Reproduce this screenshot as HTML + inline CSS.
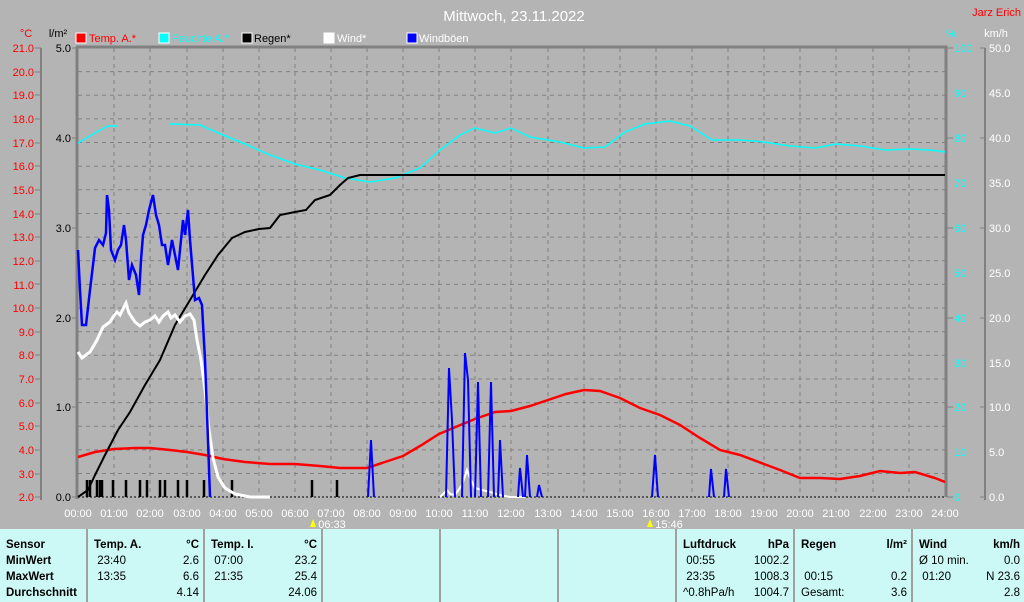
<!DOCTYPE html>
<html><head><meta charset="utf-8"><style>
*{margin:0;padding:0}
body{width:1024px;height:602px;background:#b4b4b4;overflow:hidden;position:relative;font-family:"Liberation Sans",sans-serif}
svg{position:absolute;left:0;top:0}
table{position:absolute;left:0;top:529px;width:1024px;height:73px;border-collapse:collapse;background:#ccf8f6;font-size:11.5px}
td{vertical-align:top;border-right:2px solid #a0a0a0;padding:8px 4px 0 6px;line-height:16px}
.r{display:flex;justify-content:space-between}
b{font-weight:bold}
</style></head><body>
<svg width="1024" height="602" font-family="Liberation Sans, sans-serif">
<text x="514" y="21" fill="#fff" font-size="15" text-anchor="middle">Mittwoch, 23.11.2022</text>
<text x="1021" y="16" fill="#f00" font-size="11" text-anchor="end">Jarz Erich</text>
<text x="26" y="37" fill="#f00" font-size="11" text-anchor="middle">°C</text>
<text x="58" y="37" fill="#000" font-size="11" text-anchor="middle">l/m²</text>
<text x="951" y="37" fill="#0ff" font-size="11" text-anchor="middle">%</text>
<text x="996" y="37" fill="#fff" font-size="11" text-anchor="middle">km/h</text>
<g font-size="11">
<rect x="76" y="33" width="10" height="10" fill="#f00" stroke="#fff"/><text x="89" y="42" fill="#f00">Temp. A.*</text>
<rect x="159" y="33" width="10" height="10" fill="#0ff" stroke="#fff"/><text x="172" y="42" fill="#0ff">Feuchte A.*</text>
<rect x="242" y="33" width="10" height="10" fill="#000" stroke="#fff"/><text x="254" y="42" fill="#000">Regen*</text>
<rect x="324" y="33" width="10" height="10" fill="#fff" stroke="#fff"/><text x="337" y="42" fill="#fff">Wind*</text>
<rect x="407" y="33" width="10" height="10" fill="#00f" stroke="#fff"/><text x="419" y="42" fill="#fff">Windböen</text>
</g>
<g stroke="#808080" stroke-dasharray="4,4" stroke-width="1">
<path d="M78 71.6H945M78 95.3H945M78 118.9H945M78 142.5H945M78 166.2H945M78 189.8H945M78 213.5H945M78 237.1H945M78 260.8H945M78 284.4H945M78 308H945M78 331.7H945M78 355.3H945M78 379H945M78 402.6H945M78 426.3H945M78 449.9H945M78 473.5H945"/>
<path d="M114 48V497M150 48V497M187 48V497M223 48V497M259 48V497M295 48V497M331 48V497M367 48V497M403 48V497M439 48V497M475 48V497M511 48V497M548 48V497M584 48V497M620 48V497M656 48V497M692 48V497M728 48V497M764 48V497M800 48V497M836 48V497M873 48V497M909 48V497"/>
</g>
<path d="M76 47H946V497M77 47V499" fill="none" stroke="#808080" stroke-width="3"/>
<path d="M78 497H945" stroke="#000" stroke-dasharray="2,2"/>
<path d="M41 48V500M985 48V500" stroke="#808080" stroke-width="2"/>
<g fill="#f00" font-size="11" text-anchor="end">
<text x="34" y="52">21.0</text><text x="34" y="76">20.0</text><text x="34" y="99">19.0</text><text x="34" y="123">18.0</text><text x="34" y="147">17.0</text><text x="34" y="170">16.0</text><text x="34" y="194">15.0</text><text x="34" y="218">14.0</text><text x="34" y="241">13.0</text><text x="34" y="265">12.0</text><text x="34" y="289">11.0</text><text x="34" y="312">10.0</text><text x="34" y="336">9.0</text><text x="34" y="359">8.0</text><text x="34" y="383">7.0</text><text x="34" y="407">6.0</text><text x="34" y="430">5.0</text><text x="34" y="454">4.0</text><text x="34" y="478">3.0</text><text x="34" y="501">2.0</text>
</g>
<path d="M35 48h6M35 72h6M35 95h6M35 119h6M35 143h6M35 166h6M35 190h6M35 214h6M35 237h6M35 261h6M35 284h6M35 308h6M35 332h6M35 355h6M35 379h6M35 403h6M35 426h6M35 450h6M35 474h6M35 497h6M72 48h5M72 138h5M72 228h5M72 318h5M72 407h5M72 497h5M947 48h6M947 138h6M947 228h6M947 318h6M947 407h6M947 497h6M980 48h5M980 138h5M980 228h5M980 318h5M980 407h5M980 497h5" stroke="#808080"/>
<g font-size="11" text-anchor="end" fill="#000">
<text x="71" y="52">5.0</text><text x="71" y="142">4.0</text><text x="71" y="232">3.0</text><text x="71" y="322">2.0</text><text x="71" y="411">1.0</text><text x="71" y="501">0.0</text>
</g>
<g font-size="11" fill="#0ff">
<text x="954" y="52">100</text><text x="954" y="97">90</text><text x="954" y="142">80</text><text x="954" y="187">70</text><text x="954" y="232">60</text><text x="954" y="277">50</text><text x="954" y="322">40</text><text x="954" y="367">30</text><text x="954" y="411">20</text><text x="954" y="456">10</text><text x="954" y="501">0</text>
</g>
<g font-size="11" fill="#fff">
<text x="989" y="52">50.0</text><text x="989" y="97">45.0</text><text x="989" y="142">40.0</text><text x="989" y="187">35.0</text><text x="989" y="232">30.0</text><text x="989" y="277">25.0</text><text x="989" y="322">20.0</text><text x="989" y="367">15.0</text><text x="989" y="411">10.0</text><text x="989" y="456">5.0</text><text x="989" y="501">0.0</text>
</g>
<g font-size="11" fill="#fff" text-anchor="middle">
<text x="78" y="517">00:00</text><text x="114" y="517">01:00</text><text x="150" y="517">02:00</text><text x="187" y="517">03:00</text><text x="223" y="517">04:00</text><text x="259" y="517">05:00</text><text x="295" y="517">06:00</text><text x="331" y="517">07:00</text><text x="367" y="517">08:00</text><text x="403" y="517">09:00</text><text x="439" y="517">10:00</text><text x="475" y="517">11:00</text><text x="511" y="517">12:00</text><text x="548" y="517">13:00</text><text x="584" y="517">14:00</text><text x="620" y="517">15:00</text><text x="656" y="517">16:00</text><text x="692" y="517">17:00</text><text x="728" y="517">18:00</text><text x="764" y="517">19:00</text><text x="800" y="517">20:00</text><text x="836" y="517">21:00</text><text x="873" y="517">22:00</text><text x="909" y="517">23:00</text><text x="945" y="517">24:00</text>
<text x="332" y="528">06:33</text><text x="669" y="528">15:46</text>
</g>
<path d="M313 519l3 8h-6z" fill="#ff0"/><path d="M650 519l3 8h-6z" fill="#ff0"/>
<path d="M87 480V497M90 480V497M97 480V497M100 480V497M102 480V497M113 480V497M126 480V497M140 480V497M147 480V497M160 480V497M165 480V497M178 480V497M187 480V497M204 480V497M232 480V497M312 480V497M337 480V497" stroke="#000" stroke-width="2.5"/>
<polyline fill="none" stroke="#0ff" stroke-width="1.5" points="78,143 90,136 100,130 108,126 118,126"/>
<polyline fill="none" stroke="#0ff" stroke-width="1.5" points="170,124 200,125 223,135 245,144 270,155 295,164 320,170 345,178 370,182 395,178 420,168 440,150 460,135 475,128 495,133 511,128 530,137 560,142 584,148 605,147 625,132 645,124 670,121 690,126 712,140 740,140 764,142 790,146 815,148 836,144 860,146 885,150 909,149 930,150 945,152"/>
<polyline fill="none" stroke="#f00" stroke-width="2.5" points="78,457 95,452 114,449 135,448 150,448 170,450 187,452 205,455 223,459 245,462 270,464 295,464 320,466 340,468 367,468 385,462 403,456 420,446 439,434 458,426 475,419 495,412 511,411 530,406 548,400 566,394 584,390 600,391 620,398 640,408 660,415 680,425 700,438 720,450 740,455 764,464 780,470 800,478 820,478 840,479 860,476 880,471 900,473 915,472 935,478 945,482"/>
<polyline fill="none" stroke="#000" stroke-width="2" points="78,497 88,490 95,475 105,455 118,430 130,412 145,385 160,360 175,325 190,300 205,275 218,255 232,238 245,232 259,229 270,228 280,215 295,212 306,210 315,200 330,195 340,185 348,178 360,175 380,175 945,175"/>
<polyline fill="none" stroke="#fff" stroke-width="3" points="78,352 82,358 90,352 97,340 103,327 110,322 113,317 117,312 120,315 126,303 129,313 135,322 140,326 145,322 150,320 155,316 159,322 163,316 168,312 171,318 175,315 180,322 185,316 190,314 194,320 197,340 201,360 205,390 209,430 213,458 218,477 225,488 235,494 250,497 270,497"/>
<polyline fill="none" stroke="#fff" stroke-width="2" points="440,497 447,490 450,494 455,495 462,485 467,470 470,478 475,488 482,490 490,492 500,495 510,497 525,497"/>
<polyline fill="none" stroke="#00f" stroke-width="2.5" points="78,250 80,290 82,325 86,325 90,290 93,265 95,248 99,240 103,245 106,233 107,195 109,210 111,250 115,260 118,250 121,245 124,225 126,240 129,280 132,265 136,275 139,295 141,260 143,235 146,225 149,210 153,195 156,215 159,225 162,245 165,245 168,265 172,240 175,255 178,270 181,240 183,220 185,235 188,210 190,240 195,300 199,298 202,305 205,360 208,440 210,497"/>
<path fill="none" stroke="#00f" stroke-width="2" d="M368,497L371,440L374,497M446,497L449,368L452,420L455,497M462,497L465,353L468,380L471,497M475,497L478,382L481,497M488,497L491,382L494,497M498,497L500,440L503,497M518,497L520,468L523,497M525,497L527,455L530,497M537,497L539,485L542,497M652,497L655,455L658,497M709,497L711,469L714,497M724,497L726,469L729,497"/>
</svg>
<table><tr>
<td style="width:76px"><b>Sensor<br>MinWert<br>MaxWert<br>Durchschnitt</b></td>
<td style="width:105px"><div class="r"><b>Temp. A.</b><b>°C</b></div><div class="r"><span>&nbsp;23:40</span><span>2.6</span></div><div class="r"><span>&nbsp;13:35</span><span>6.6</span></div><div class="r"><span></span><span>4.14</span></div></td>
<td style="width:106px"><div class="r"><b>Temp. I.</b><b>°C</b></div><div class="r"><span>&nbsp;07:00</span><span>23.2</span></div><div class="r"><span>&nbsp;21:35</span><span>25.4</span></div><div class="r"><span></span><span>24.06</span></div></td>
<td style="width:106px"></td><td style="width:106px"></td><td style="width:106px"></td>
<td style="width:106px"><div class="r"><b>Luftdruck</b><b>hPa</b></div><div class="r"><span>&nbsp;00:55</span><span>1002.2</span></div><div class="r"><span>&nbsp;23:35</span><span>1008.3</span></div><div class="r"><span>^0.8hPa/h</span><span>1004.7</span></div></td>
<td style="width:106px"><div class="r"><b>Regen</b><b>l/m²</b></div><div class="r"><span>&nbsp;</span><span></span></div><div class="r"><span>&nbsp;00:15</span><span>0.2</span></div><div class="r"><span>Gesamt:</span><span>3.6</span></div></td>
<td style="border-right:none"><div class="r"><b>Wind</b><b>km/h</b></div><div class="r"><span>Ø 10 min.</span><span>0.0</span></div><div class="r"><span>&nbsp;01:20</span><span>N 23.6</span></div><div class="r"><span></span><span>2.8</span></div></td>
</tr></table>
</body></html>
